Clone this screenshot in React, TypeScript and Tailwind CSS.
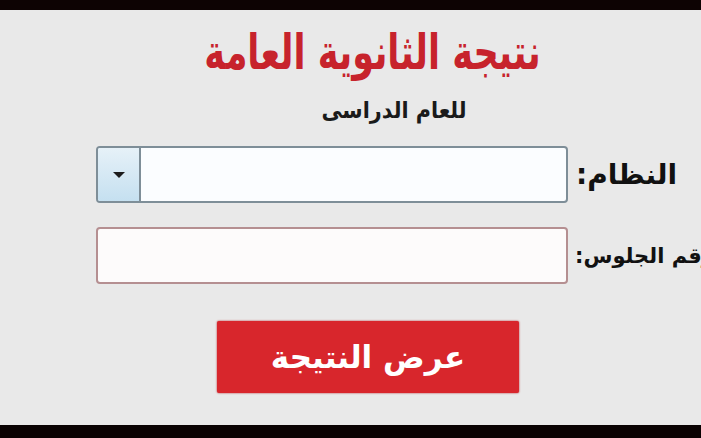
import React from 'react';

const arabic = { fontFamily: '"DejaVu Sans", "Noto Sans", sans-serif' };
const condensed = { fontFamily: '"DejaVu Sans Condensed", "DejaVu Sans", sans-serif' };

export default function App() {
  return (
    <div className="flex h-[438px] w-[701px] flex-col overflow-hidden bg-[#e9e9e9]" style={arabic}>
      <div className="h-[10px] bg-[#0d0303]" />

      <div className="flex flex-1 flex-col">
        {/* heading */}
        <div className="mt-[16px] flex w-[745px] justify-center">
          <h1
            dir="rtl"
            style={condensed}
            className="scale-y-[1.25] whitespace-nowrap text-[39px] leading-[54px] font-bold tracking-[-1px] text-[#c7232c]"
          >
            نتيجة الثانوية العامة
          </h1>
        </div>
        <div className="mt-[17px] flex w-[788px] justify-center">
          <p
            dir="rtl"
            style={condensed}
            className="whitespace-nowrap text-[23px] leading-[26px] font-bold text-[#1a1a1a]"
          >
            للعام الدراسى
          </p>
        </div>

        {/* system select */}
        <div className="mt-[23px] flex items-center overflow-hidden pl-[96px]">
          <div className="flex h-[57px] w-[472px] shrink-0 overflow-hidden rounded-[4px] border-2 border-[#7e8e98] bg-[#fbfdff]">
            <div className="flex w-[43px] items-center justify-center border-r-2 border-[#7e8e98] bg-gradient-to-b from-[#e6f1f8] to-[#c5e0f0]">
              <svg width="14" height="8" viewBox="0 0 14 8">
                <path d="M1 1 H13 L7 7 Z" fill="#1c1c1c" />
              </svg>
            </div>
            <div className="flex-1" />
          </div>
          <span
            dir="rtl"
            className="ml-[8px] whitespace-nowrap text-[28px] leading-[36px] font-bold text-[#111]"
          >
            النظام:
          </span>
        </div>

        {/* seat number */}
        <div className="mt-[24px] flex items-center overflow-hidden pl-[96px]">
          <div className="h-[57px] w-[472px] shrink-0 rounded-[4px] border-2 border-[#b58f91] bg-[#fdfbfb]" />
          <span
            dir="rtl"
            className="ml-[7px] whitespace-nowrap text-[21px] leading-[30px] font-bold text-[#111]"
          >
            رقم الجلوس:
          </span>
        </div>

        {/* submit */}
        <button
          dir="rtl"
          className="mt-[37px] ml-[217px] flex h-[72px] w-[302px] items-center justify-center rounded-[2px] bg-[#d8262c] text-[31px] leading-[40px] font-bold text-white shadow-[0_0_2px_#b01a20]"
        >
          عرض النتيجة
        </button>
      </div>

      <div className="h-[13px] bg-[#0a0202]" />
    </div>
  );
}
